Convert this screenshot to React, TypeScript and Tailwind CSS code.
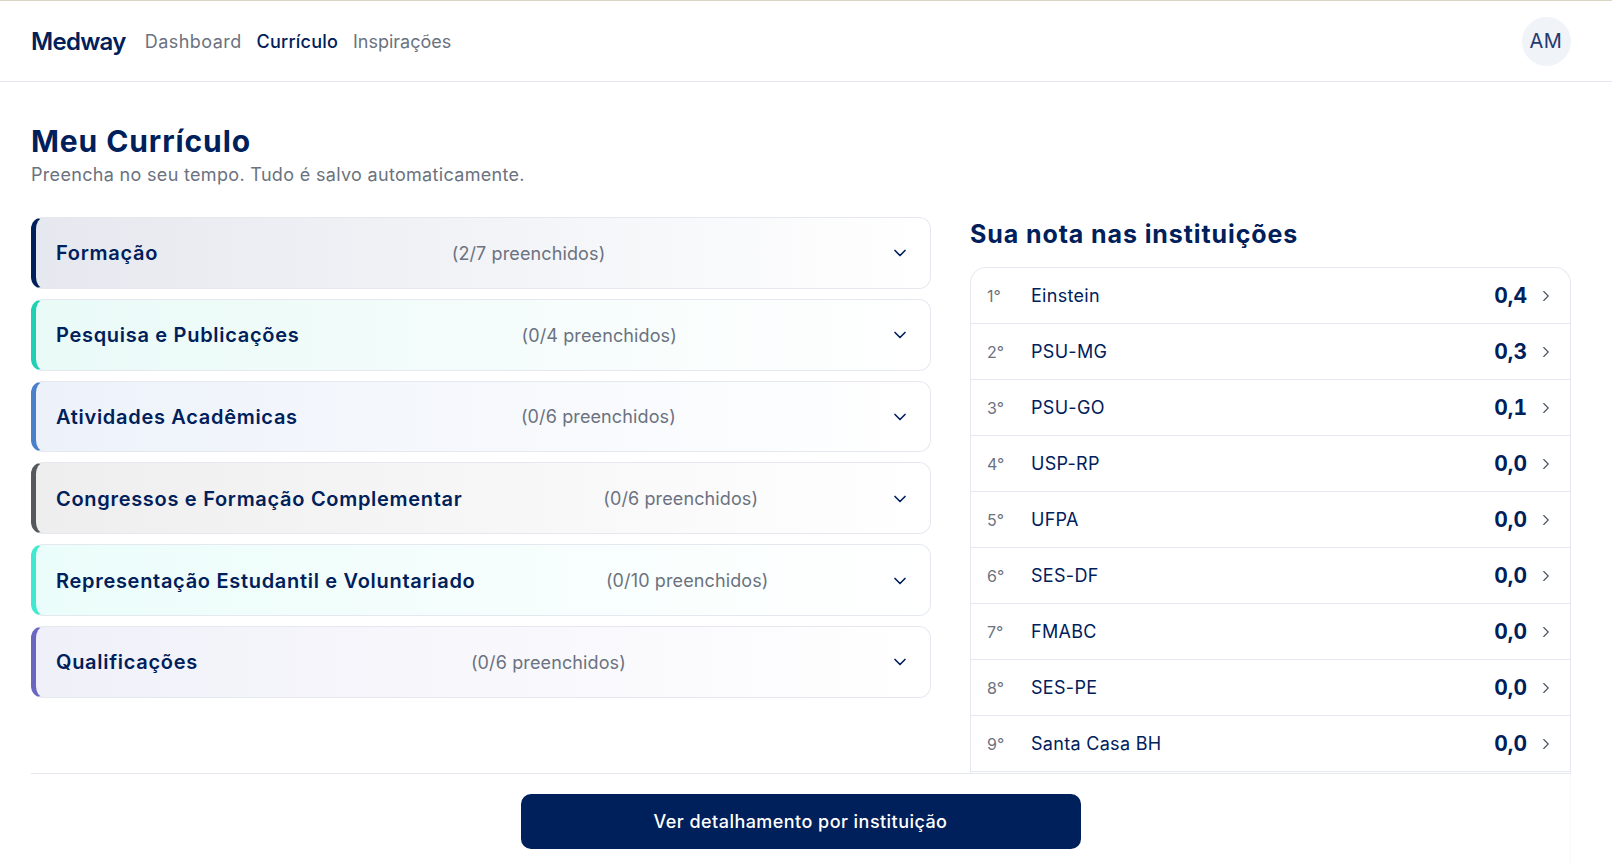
import { ChevronDown, ChevronRight } from "lucide-react"

const secoes = [
  { titulo: "Formação", qtd: "(2/7 preenchidos)", barra: "border-l-[#00205b]", fundo: "from-[#e6e8ef] to-white" },
  { titulo: "Pesquisa e Publicações", qtd: "(0/4 preenchidos)", barra: "border-l-[#1fd1b2]", fundo: "from-[#e9faf7] to-white" },
  { titulo: "Atividades Acadêmicas", qtd: "(0/6 preenchidos)", barra: "border-l-[#4a7fc9]", fundo: "from-[#edf2fa] to-white" },
  { titulo: "Congressos e Formação Complementar", qtd: "(0/6 preenchidos)", barra: "border-l-[#55585c]", fundo: "from-[#eeeeee] to-white" },
  { titulo: "Representação Estudantil e Voluntariado", qtd: "(0/10 preenchidos)", barra: "border-l-[#3fe8cf]", fundo: "from-[#ebfdfa] to-white" },
  { titulo: "Qualificações", qtd: "(0/6 preenchidos)", barra: "border-l-[#6a67c0]", fundo: "from-[#f0f0f9] to-white" },
]

const notas = [
  { nome: "Einstein", nota: "0,4" },
  { nome: "PSU-MG", nota: "0,3" },
  { nome: "PSU-GO", nota: "0,1" },
  { nome: "USP-RP", nota: "0,0" },
  { nome: "UFPA", nota: "0,0" },
  { nome: "SES-DF", nota: "0,0" },
  { nome: "FMABC", nota: "0,0" },
  { nome: "SES-PE", nota: "0,0" },
  { nome: "Santa Casa BH", nota: "0,0" },
]

export default function App() {
  return (
    <div className="h-[866px] overflow-hidden bg-white flex flex-col font-['Inter',sans-serif] text-[#00205b]">
      <div className="h-px bg-[#d9d6c4]" />
      <header className="h-[81px] shrink-0 border-b border-[#e5e9ef] pl-[31px] pr-[41px] flex items-center justify-between">
        <div className="flex items-center gap-[15px]">
          <span className="text-[24px] font-semibold tracking-[-0.7px] mr-[4px] mt-[1px]">Medway</span>
          <span className="text-[18px] tracking-[0.45px] text-[#6b7280]">Dashboard</span>
          <span className="text-[18px] tracking-[0.2px] font-medium">Currículo</span>
          <span className="text-[18px] text-[#6b7280]">Inspirações</span>
        </div>
        <div className="w-[49px] h-[49px] mr-[0.5px] rounded-full bg-[#f0f3f8] flex items-center justify-center text-[20px] tracking-[0.5px] text-[#24396f]">AM</div>
      </header>

      <main className="flex-1 min-h-0 pl-[31px] pr-[41px] flex flex-col">
        <h1 className="mt-[40px] text-[30px] leading-[38px] font-bold tracking-[0.9px]">Meu Currículo</h1>
        <p className="mt-[1px] text-[18px] leading-[28px] tracking-[0.32px] text-[#6b7280]">Preencha no seu tempo. Tudo é salvo automaticamente.</p>

        <div className="mt-[28px] flex-1 min-h-0 flex gap-[39px]">
          <div className="w-[900px] shrink-0 flex flex-col gap-[10px]">
            {secoes.map((s) => (
              <div key={s.titulo} className={`h-[71.8px] rounded-[12px] border border-[#e5e9ef] border-l-[5px] bg-gradient-to-r ${s.barra} ${s.fundo} pt-[1px] pl-[20px] pr-[20px] flex items-center justify-between`}>
                <span className="text-[20px] font-semibold tracking-[0.7px]">{s.titulo}</span>
                <span className="ml-[9px] text-[18px] tracking-[0.12px] text-[#6b7280]">{s.qtd}</span>
                <ChevronDown size={20} strokeWidth={2} />
              </div>
            ))}
          </div>

          <div className="flex-1 min-w-0 flex flex-col">
            <h2 className="text-[25px] leading-[34px] font-bold tracking-[0.9px]">Sua nota nas instituições</h2>
            <div className="mt-[16px] flex-1 min-h-0 overflow-hidden rounded-t-[16px] border-x border-t border-[#e5e9ef]">
              {notas.map((n, i) => (
                <div key={n.nome} className="h-[56px] border-b border-[#e5e9ef] pl-[16px] pr-[15px] flex items-center">
                  <span className="w-[44px] text-[16px] text-[#6b7280]">{i + 1}°</span>
                  <span className="flex-1 text-[18px] tracking-[0.3px]">{n.nome}</span>
                  <span className="text-[21px] font-bold tabular-nums mr-[10px]">{n.nota}</span>
                  <ChevronRight size={18} strokeWidth={1.5} className="text-[#4b5563]" />
                </div>
              ))}
            </div>
          </div>
        </div>
      </main>

      <div className="shrink-0 ml-[31px] mr-[41px] border-t border-r border-t-[#e5e9ef] border-r-[#f8f9fa] pt-[20px] pb-[17px] flex justify-center">
        <button className="w-[560px] h-[55px] rounded-[10px] bg-[#00205b] text-white text-[18px] font-medium tracking-[0.45px]">Ver detalhamento por instituição</button>
      </div>
    </div>
  )
}
